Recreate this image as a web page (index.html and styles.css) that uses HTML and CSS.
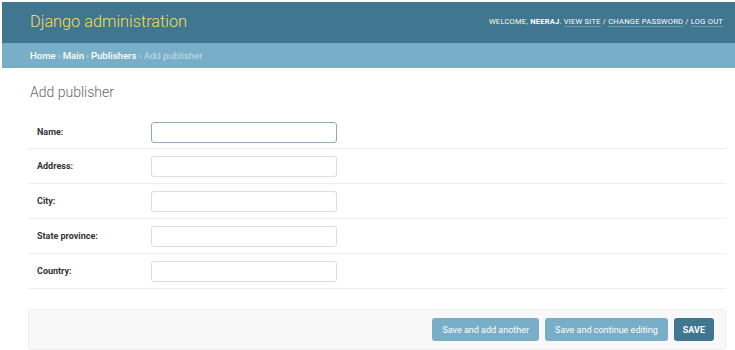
FILE: index.html
```html
<!DOCTYPE html>
<html>
<head>
<meta charset="utf-8">
<title>Add publisher | Django site admin</title>
<link rel="stylesheet" href="styles.css">
</head>
<body>
<div class="header">
  <div class="branding">Django administration</div>
  <div class="user-tools">Welcome, <strong>neeraj</strong>. <a href="#">View site</a> / <a href="#">Change password</a> / <a href="#">Log out</a></div>
</div>
<div class="breadcrumbs"><a href="#">Home</a> › <a href="#">Main</a> › <a href="#">Publishers</a> › Add publisher</div>
<div class="content">
  <h1 class="title">Add publisher</h1>
  <form class="form">
    <div class="form-row"><label class="label">Name:</label><input class="input focus" type="text"></div>
    <div class="form-row"><label class="label">Address:</label><input class="input" type="text"></div>
    <div class="form-row"><label class="label">City:</label><input class="input" type="text"></div>
    <div class="form-row"><label class="label">State province:</label><input class="input" type="text"></div>
    <div class="form-row"><label class="label">Country:</label><input class="input" type="text"></div>
    <div class="submit-row">
      <button class="btn" type="button">Save and add another</button>
      <button class="btn" type="button">Save and continue editing</button>
      <button class="btn default" type="button">SAVE</button>
    </div>
  </form>
</div>
</body>
</html>
```
FILE: styles.css
```css
* { box-sizing: border-box; }
html, body { height: 100%; }
body {
  margin: 2px 0 0 2px;
  font-family: Roboto, "Liberation Sans", sans-serif;
  color: #333;
  background: #fff;
  overflow: hidden;
}
a { text-decoration: none; }
.header {
  height: 41px;
  background: #417690;
  display: flex;
  align-items: center;
  justify-content: space-between;
  padding: 0 12px 0 28px;
}
.branding {
  font-weight: 300;
  font-size: 16.3px;
  color: #f5dd5d;
  margin-top: -2px;
}
.user-tools {
  font-size: 7.6px;
  letter-spacing: 0.2px;
  text-transform: uppercase;
  color: #ffc;
  margin-top: -2px;
}
.user-tools strong { font-weight: 700; color: #fff; }
.user-tools a {
  color: #fff;
  border-bottom: 1px solid rgba(255,255,255,0.25);
}
.breadcrumbs {
  height: 25px;
  background: #79aec8;
  color: #c4dce8;
  font-size: 9.6px;
  padding: 0 0 0 28px;
  display: flex;
  align-items: center;
  gap: 2px;
}
.breadcrumbs a { color: #fff; font-weight: 500; }
.content {
  padding: 16px 9px 0 26px;
}
.title {
  margin: 0 0 16px 2px;
  font-size: 14px;
  font-weight: 300;
  color: #666;
}
.form-row {
  display: flex;
  align-items: center;
  height: 35px;
  border-bottom: 1px solid #eee;
  padding-left: 9px;
}
.form-row:first-child { height: 33px; }
.label {
  width: 114px;
  font-size: 9px;
  font-weight: 700;
  color: #333;
}
.input {
  width: 186px;
  height: 21px;
  border: 1px solid #ddd;
  border-radius: 3px;
  background: #fff;
  margin: 0;
}
.input.focus { border-color: #8daac2; }
.submit-row {
  margin-top: 20px;
  height: 41px;
  background: #f8f8f8;
  border: 1px solid #eee;
  border-radius: 3px;
  display: flex;
  align-items: center;
  justify-content: flex-end;
  gap: 6px;
  padding-right: 11px;
}
.btn {
  height: 23px;
  border: none;
  border-radius: 3px;
  background: #79aec8;
  color: #fff;
  font-family: Roboto, "Liberation Sans", sans-serif;
  font-size: 9px;
  padding: 0 10px;
}
.btn.default {
  background: #417690;
  font-weight: 700;
  padding: 0 9px;
}
```
